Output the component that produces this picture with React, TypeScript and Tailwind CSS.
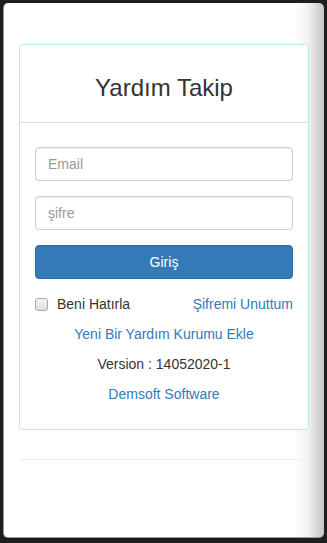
import React from "react";

export default function App() {
  return (
    <div className="h-[543px] w-[327px] bg-[#1e1e1e] pl-[3px] pt-[3px] font-['Liberation_Sans',Arial,sans-serif] text-[14px] text-[#333]">
      <div className="h-[535px] w-[321px] overflow-hidden rounded-[5px] border-b border-l border-[#9a9a9a] bg-[linear-gradient(to_right,#fff_0%,#fff_91%,#f2f2f2_95%,#c4c4c4_100%)] pt-[41px] pl-[15px]">
        <div className="w-[290px] rounded-[4px] border border-[#bce8f1] bg-white">
          <div className="flex h-[78px] items-center justify-center border-b border-[#ddd]">
            <h3 className="pt-[9px] text-[24px] leading-[26px] text-[#333]">Yardım Takip</h3>
          </div>
          <form className="flex flex-col px-[15px] pt-[24px] pb-[25px]" onSubmit={(e) => e.preventDefault()}>
            <input
              type="email"
              placeholder="Email"
              className="h-[34px] w-full rounded-[4px] border border-[#ccc] px-[12px] text-[14px] text-[#555] shadow-[inset_0_1px_1px_rgba(0,0,0,0.075)] outline-none placeholder:text-[#999]"
            />
            <input
              type="password"
              placeholder="şifre"
              className="mt-[15px] h-[34px] w-full rounded-[4px] border border-[#ccc] px-[12px] text-[14px] text-[#555] shadow-[inset_0_1px_1px_rgba(0,0,0,0.075)] outline-none placeholder:text-[#999]"
            />
            <button
              type="submit"
              className="mt-[15px] h-[34px] w-full rounded-[4px] border border-[#2e6da4] bg-[#337ab7] text-[14px] text-white"
            >
              Giriş
            </button>
            <div className="mt-[15px] flex h-[20px] items-center justify-between leading-[20px]">
              <label className="flex items-center">
                <span className="h-[13px] w-[13px] rounded-[3px] border border-[#a6a6a6] bg-[linear-gradient(#f4f4f4,#dedede)]" />
                <span className="ml-[9px]">Beni Hatırla</span>
              </label>
              <a href="#" className="text-[#337ab7]">Şifremi Unuttum</a>
            </div>
            <a href="#" className="mt-[10px] block text-center leading-[20px] text-[#337ab7]">
              Yeni Bir Yardım Kurumu Ekle
            </a>
            <p className="mt-[10px] text-center leading-[20px]">Version : 14052020-1</p>
            <a href="#" className="mt-[10px] block text-center leading-[20px] text-[#337ab7]">
              Demsoft Software
            </a>
          </form>
        </div>
        <hr className="mt-[29px] w-[290px] border-t border-[#eee]" />
      </div>
    </div>
  );
}
